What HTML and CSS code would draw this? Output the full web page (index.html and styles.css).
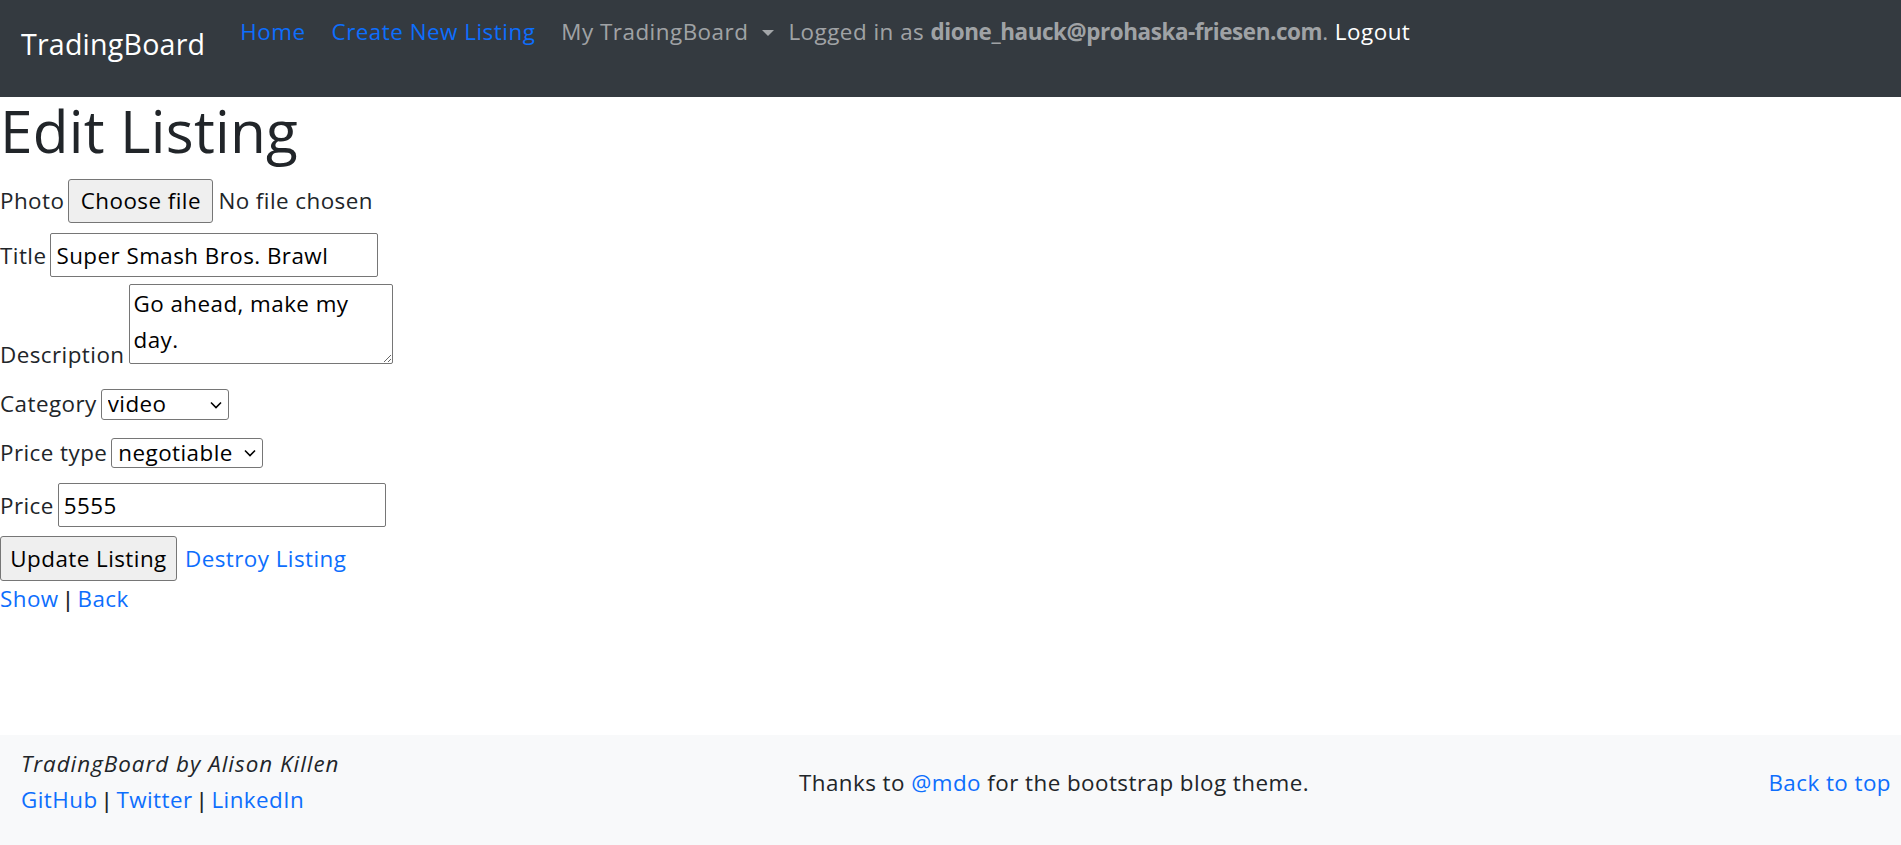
FILE: index.html
```html
<!DOCTYPE html>
<html lang="en">
<head>
<meta charset="utf-8">
<title>TradingBoard</title>
<link rel="stylesheet" href="styles.css">
</head>
<body>
<header class="navbar">
  <a class="brand" href="#">TradingBoard</a>
  <nav class="nav">
    <a class="nav-link nav-link-active" href="#">Home</a>
    <a class="nav-link nav-link-active" href="#">Create New Listing</a>
    <span class="nav-link nav-dropdown">My TradingBoard<span class="caret"></span></span>
    <span class="nav-text">Logged in as <b class="nav-email">dione_hauck@prohaska-friesen.com</b>. <a class="nav-logout" href="#">Logout</a></span>
  </nav>
</header>

<main class="content">
  <h1 class="page-title">Edit Listing</h1>
  <form class="listing-form">
    <div class="field field-photo">
      <label class="field-label">Photo</label>
      <span class="file-input">
        <button type="button" class="btn btn-file">Choose file</button>
        <span class="file-name">No file chosen</span>
      </span>
    </div>
    <div class="field field-title">
      <label class="field-label" for="title">Title</label>
      <input class="text-input" id="title" type="text" value="Super Smash Bros. Brawl">
    </div>
    <div class="field field-description">
      <label class="field-label" for="description">Description</label>
      <textarea class="text-area" id="description">Go ahead, make my day.</textarea>
    </div>
    <div class="field field-category">
      <label class="field-label" for="category">Category</label>
      <select class="select select-category" id="category">
        <option>books</option>
        <option selected>video</option>
        <option>furniture</option>
      </select>
    </div>
    <div class="field field-price-type">
      <label class="field-label" for="price_type">Price type</label>
      <select class="select select-price-type" id="price_type">
        <option>fixed</option>
        <option selected>negotiable</option>
        <option>free</option>
      </select>
    </div>
    <div class="field field-price">
      <label class="field-label" for="price">Price</label>
      <input class="text-input" id="price" type="text" value="5555">
    </div>
    <div class="field field-actions">
      <button type="button" class="btn btn-update">Update Listing</button>
      <a class="link" href="#">Destroy Listing</a>
    </div>
  </form>
  <div class="page-links"><a class="link" href="#">Show</a> <span class="sep">|</span> <a class="link" href="#">Back</a></div>
</main>

<footer class="footer">
  <div class="footer-left">
    <p class="footer-credit">TradingBoard by Alison Killen</p>
    <p class="footer-social"><a class="link" href="#">GitHub</a> <span class="sep">|</span> <a class="link" href="#">Twitter</a> <span class="sep">|</span> <a class="link" href="#">LinkedIn</a></p>
  </div>
  <p class="footer-thanks">Thanks to <a class="link" href="#">@mdo</a> for the bootstrap blog theme.</p>
  <a class="link footer-top" href="#">Back to top</a>
</footer>
</body>
</html>
```

FILE: styles.css
```css
* {
  box-sizing: border-box;
}

html, body {
  margin: 0;
  padding: 0;
}

body {
  font-family: "Open Sans", "Noto Sans", sans-serif;
  font-size: 22.4px;
  line-height: 36px;
  letter-spacing: 0.45px;
  color: #212529;
  background: #ffffff;
  min-height: 100vh;
  display: flex;
  flex-direction: column;
}

a {
  text-decoration: none;
}

.link {
  color: #0d6efd;
}

.sep {
  font-family: "Liberation Sans", Arial, sans-serif;
}

/* ---------- navbar ---------- */
.navbar {
  background: #343a40;
  height: 97px;
  display: flex;
  align-items: flex-start;
  padding-left: 21px;
}

.brand {
  color: #ffffff;
  font-size: 28.6px;
  line-height: 40px;
  letter-spacing: 0.2px;
  margin-top: 24px;
  margin-right: 35px;
}

.nav {
  display: flex;
  align-items: center;
  margin-top: 17px;
  line-height: 30px;
  letter-spacing: 0.5px;
  white-space: nowrap;
}

.nav-link {
  margin-right: 26px;
  color: rgba(255, 255, 255, 0.55);
}

.nav-link-active {
  color: #0d6efd;
}

.nav-dropdown {
  display: inline-flex;
  align-items: center;
  margin-right: 14px;
}

.caret {
  display: inline-block;
  margin-left: 14px;
  width: 0;
  height: 0;
  border-top: 6px solid rgba(255, 255, 255, 0.55);
  border-left: 6px solid transparent;
  border-right: 6px solid transparent;
  margin-top: 2px;
}

.nav-text {
  color: rgba(255, 255, 255, 0.55);
}

.nav-email {
  font-weight: 700;
  letter-spacing: -0.4px;
}

.nav-logout {
  color: #ffffff;
}

/* ---------- content ---------- */
.content {
  flex: 1 0 auto;
}

.page-title {
  font-size: 58.5px;
  font-weight: 400;
  line-height: 66px;
  letter-spacing: 0.2px;
  margin: 0 0 16px;
}

.listing-form {
  margin: 0;
}

.field {
  display: flex;
  align-items: baseline;
  gap: 4px;
}

.field-label {
  line-height: 1;
}

.field-title { margin-top: 10px; }
.field-description { margin-top: 7px; align-items: flex-end; }
.field-description .field-label { margin-bottom: -2px; }
.field-category { margin-top: 25px; }
.field-price-type { margin-top: 18px; }
.field-price { margin-top: 15px; }
.field-actions { margin-top: 9px; gap: 8px; }

.btn {
  font: inherit;
  letter-spacing: inherit;
  color: #000000;
  background: #efefef;
  border: 1px solid #767676;
  border-radius: 3px;
  line-height: 30px;
  padding: 0;
  text-align: center;
}

.file-input {
  display: inline-flex;
  align-items: baseline;
}

.btn-file {
  width: 145px;
  height: 44px;
}

.file-name {
  margin-left: 5px;
  line-height: 1;
}

.btn-update {
  width: 177px;
  height: 45px;
}

.text-input {
  font: inherit;
  letter-spacing: inherit;
  color: #000000;
  width: 328px;
  height: 44px;
  padding: 0 5px;
  border: 1px solid #767676;
  border-radius: 2px;
  background: #ffffff;
}

.text-area {
  font: inherit;
  letter-spacing: inherit;
  line-height: 36px;
  color: #000000;
  width: 264px;
  height: 80px;
  padding: 1px 4px;
  border: 1px solid #767676;
  border-radius: 2px;
  margin: 0;
}

.select {
  font: inherit;
  letter-spacing: inherit;
  line-height: 1.2;
  color: #000000;
  border: 1px solid #767676;
  border-radius: 3px;
  padding: 0 20px 0 6px;
  appearance: none;
  -webkit-appearance: none;
  background-color: #ffffff;
  background-image: url("data:image/svg+xml,%3Csvg xmlns='http://www.w3.org/2000/svg' width='12' height='8' viewBox='0 0 12 8'%3E%3Cpath d='M1 1.5l5 5 5-5' fill='none' stroke='%23000' stroke-width='1.6'/%3E%3C/svg%3E");
  background-repeat: no-repeat;
  background-position: right 6px center;
  background-size: 12px 8px;
}

.select-category {
  width: 128px;
  height: 31px;
}

.select-price-type {
  width: 152px;
  height: 30px;
}

.page-links {
  line-height: 36px;
}

/* ---------- footer ---------- */
.footer {
  background: #f8f9fa;
  display: flex;
  justify-content: space-between;
  align-items: center;
  padding: 11px 10px 26px 21px;
}

.footer p {
  margin: 0;
}

.footer-credit {
  font-style: italic;
  letter-spacing: 1px;
}
```
